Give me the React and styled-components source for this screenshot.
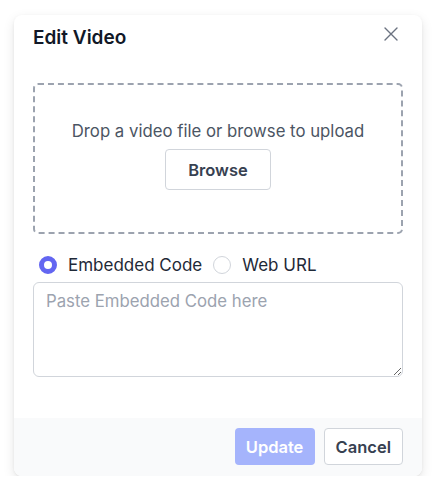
import styled, { createGlobalStyle } from "styled-components";
import { useState } from "react";

const GlobalStyle = createGlobalStyle`
  * { box-sizing: border-box; }
  body {
    margin: 0;
    background: #ffffff;
    font-family: Inter, "Liberation Sans", sans-serif;
  }
`;

const Page = styled.div`
  padding: 15px 10px 0 14px;
`;

const Card = styled.div`
  width: 408px;
  background: #fff;
  border-radius: 8px;
  box-shadow: 0 4px 12px rgba(0, 0, 0, 0.1), 0 1px 3px rgba(0, 0, 0, 0.06);
  overflow: hidden;
`;

const Header = styled.div`
  display: flex;
  justify-content: space-between;
  align-items: flex-start;
  padding: 11px 19px 0 19px;
  height: 48px;
`;

const Title = styled.h2`
  margin: 0;
  font-size: 19px;
  line-height: 24px;
  font-weight: 600;
  color: #111827;
`;

const CloseButton = styled.button`
  border: none;
  background: none;
  padding: 0;
  margin-top: 1px;
  margin-right: 5px;
  color: #6b7280;
  display: flex;
  cursor: pointer;
`;

const Body = styled.div`
  padding: 20px 19px 41px;
  display: flex;
  flex-direction: column;
`;

const DropZone = styled.div`
  height: 151px;
  border: 2px dashed #9ca3af;
  border-radius: 5px;
  display: flex;
  flex-direction: column;
  align-items: center;
  justify-content: center;
  gap: 6px;
  padding-bottom: 8px;
`;

const DropText = styled.p`
  margin: 0;
  font-size: 16.75px;
  line-height: 24px;
  color: #4b5563;
`;

const OutlineButton = styled.button`
  font-family: inherit;
  font-size: 16.5px;
  font-weight: 600;
  color: #374151;
  background: #fff;
  border: 1px solid #d1d5db;
  border-radius: 4px;
  height: ${(p) => p.$h || 41}px;
  padding: 0 ${(p) => p.$px || 22}px;
  cursor: pointer;
`;

const RadioRow = styled.div`
  display: flex;
  align-items: center;
  gap: 11px;
  margin: 20px 0 0 6px;
  height: 22px;
`;

const RadioLabel = styled.label`
  display: flex;
  align-items: center;
  gap: 11px;
  font-size: 17px;
  color: #1f2937;
  cursor: pointer;
`;

const RadioDot = styled.span`
  width: 18px;
  height: 18px;
  border-radius: 50%;
  border: ${(p) => (p.$on ? "5px solid #6366f1" : "1px solid #d1d5db")};
  background: #fff;
`;

const TextArea = styled.textarea`
  margin-top: 6px;
  height: 95px;
  resize: vertical;
  border: 1px solid #d1d5db;
  border-radius: 6px;
  padding: 6px 12px;
  font-family: inherit;
  font-size: 16.75px;
  line-height: 24px;
  color: #111827;
  outline: none;
  &::placeholder {
    color: #9ca3af;
  }
`;

const Footer = styled.div`
  background: #f9fafb;
  display: flex;
  justify-content: flex-end;
  gap: 9px;
  padding: 10px 19px 11px;
`;

const PrimaryButton = styled.button`
  font-family: inherit;
  font-size: 16.5px;
  font-weight: 600;
  color: #fff;
  background: #a5b4fc;
  border: none;
  border-radius: 4px;
  height: 37px;
  width: 80px;
`;

export default function App() {
  const [mode, setMode] = useState("embed");
  return (
    <Page>
      <GlobalStyle />
      <Card>
        <Header>
          <Title>Edit Video</Title>
          <CloseButton aria-label="Close">
            <svg width="14" height="14" viewBox="0 0 14 14" fill="none" stroke="currentColor" strokeWidth="1.4" strokeLinecap="round">
              <path d="M1 1l12 12M13 1L1 13" />
            </svg>
          </CloseButton>
        </Header>
        <Body>
          <DropZone>
            <DropText>Drop a video file or browse to upload</DropText>
            <OutlineButton>Browse</OutlineButton>
          </DropZone>
          <RadioRow>
            <RadioLabel onClick={() => setMode("embed")}>
              <RadioDot $on={mode === "embed"} />
              Embedded Code
            </RadioLabel>
            <RadioLabel onClick={() => setMode("url")}>
              <RadioDot $on={mode === "url"} />
              Web URL
            </RadioLabel>
          </RadioRow>
          <TextArea placeholder={mode === "embed" ? "Paste Embedded Code here" : "Paste Web URL here"} />
        </Body>
        <Footer>
          <PrimaryButton disabled>Update</PrimaryButton>
          <OutlineButton $h={37} $px={11}>Cancel</OutlineButton>
        </Footer>
      </Card>
    </Page>
  );
}
